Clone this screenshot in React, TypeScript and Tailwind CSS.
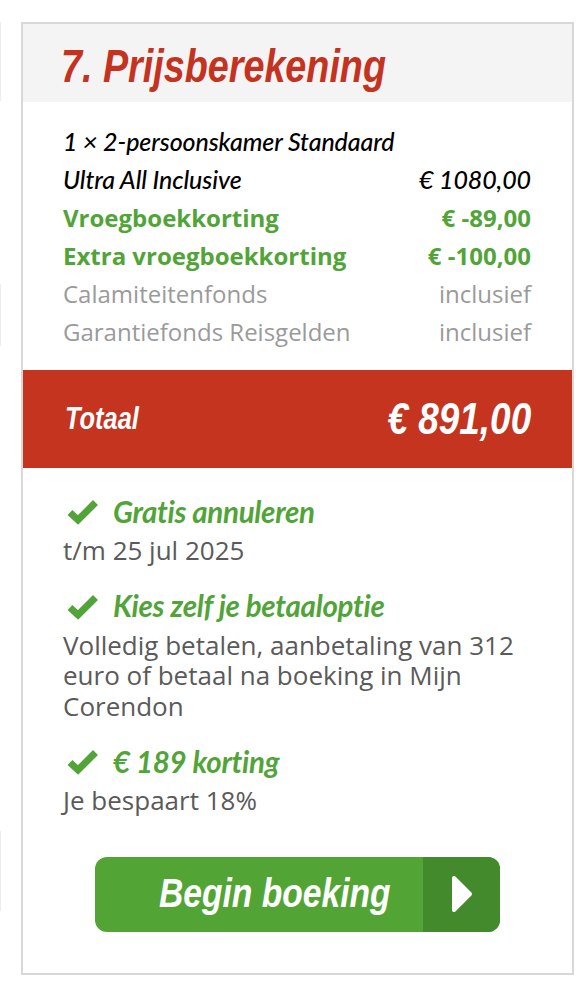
import React from 'react';

// Arial Narrow look: Liberation Sans squeezed horizontally
const narrow = "font-['Liberation_Sans',sans-serif] italic font-bold inline-block whitespace-nowrap scale-x-[0.82]";
const round = "font-['Lato','Liberation_Sans',sans-serif]";
const open = "font-['Open_Sans','Liberation_Sans',sans-serif]";

const priceRows = [
  { label: 'Ultra All Inclusive', value: '€ 1080,00', kind: 'main' },
  { label: 'Vroegboekkorting', value: '€ -89,00', kind: 'discount' },
  { label: 'Extra vroegboekkorting', value: '€ -100,00', kind: 'discount' },
  { label: 'Calamiteitenfonds', value: 'inclusief', kind: 'muted' },
  { label: 'Garantiefonds Reisgelden', value: 'inclusief', kind: 'muted' },
];

const CheckIcon = () => (
  <svg width="32" height="26" viewBox="0 0 32 26" className="shrink-0">
    <path d="M3 13.5 L11 21 L28.5 3.5" fill="none" stroke="#51a437" strokeWidth="7" strokeLinejoin="miter" />
  </svg>
);

const Perk = ({ title, children }: { title: string; children: React.ReactNode }) => (
  <div>
    <div className="flex items-center h-[36px] pl-[4px]">
      <CheckIcon />
      <span className={`${round} italic font-bold text-[29.5px] text-[#51a437] ml-[14px] tracking-[-0.3px]`}>{title}</span>
    </div>
    <div className={`${open} text-[26px] leading-[30.5px] text-[#5a5a5a] mt-[5px] max-w-[470px]`}>{children}</div>
  </div>
);

export default function App() {
  return (
    <div className="flex bg-white min-h-[984px] w-[582px]">
      <div className="w-[2px] flex flex-col">
        <div className="mt-[22px] h-[79px] border-l border-[#ececec]" />
        <div className="mt-[183px] h-[62px] border-l border-[#ececec]" />
        <div className="mt-[485px] h-[80px] border-l border-[#ececec]" />
      </div>
      <div className="ml-[19px] mt-[22px] w-[553px] h-[953px] border-2 border-[#d8d8d8] flex flex-col">
        <div className="h-[78px] bg-[#f4f4f4] flex items-center pl-[38px]">
          <h2 className="text-[46px] text-[#c4331f] leading-none mt-[4px]">
            <span className={`${narrow} origin-left`}>7. Prijsberekening</span>
          </h2>
        </div>

        <div className="pl-[40px] pr-[41px] pt-[21px] pb-[19px]">
          <div className={`${round} italic font-medium text-[25px] tracking-[-0.1px] text-black h-[38px] flex items-center`}>
            1 × 2-persoonskamer Standaard
          </div>
          {priceRows.map((row) => (
            <div
              key={row.label}
              className={`h-[38px] flex items-center justify-between ${
                row.kind === 'main'
                  ? `${round} italic font-medium text-[25px] tracking-[-0.1px] text-black`
                  : row.kind === 'discount'
                  ? `${open} font-bold text-[24px] text-[#51a437]`
                  : `${open} text-[24px] text-[#9a9a9a]`
              }`}
            >
              <span>{row.label}</span>
              <span>{row.value}</span>
            </div>
          ))}
        </div>

        <div className="h-[98px] bg-[#c4341f] flex items-center justify-between pl-[42px] pr-[41px] text-white">
          <span className={`${narrow} origin-left text-[31px]`}>Totaal</span>
          <span className={`${narrow} origin-right text-[45px]`}>€ 891,00</span>
        </div>

        <div className="pl-[40px] pr-[20px] pt-[26px] flex flex-col gap-[23px]">
          <Perk title="Gratis annuleren">t/m 25 jul 2025</Perk>
          <Perk title="Kies zelf je betaaloptie">
            Volledig betalen, aanbetaling van 312 euro of betaal na boeking in Mijn Corendon
          </Perk>
          <Perk title="€ 189 korting">Je bespaart 18%</Perk>
        </div>

        <div className="flex justify-center mt-[41px]">
          <button className="w-[405px] h-[75px] rounded-[12px] overflow-hidden flex bg-[#52a535]">
            <span className="w-[328px] shrink-0 flex items-center pl-[64px] text-white text-[41px] overflow-hidden">
              <span className={`${narrow} origin-left`}>Begin boeking</span>
            </span>
            <span className="flex-1 bg-[#428a2c] flex items-center justify-center">
              <svg width="22" height="38" viewBox="0 0 22 38">
                <path d="M3 3 L19 19 L3 35 Z" fill="white" stroke="white" strokeWidth="4" strokeLinejoin="round" />
              </svg>
            </span>
          </button>
        </div>
      </div>
    </div>
  );
}
